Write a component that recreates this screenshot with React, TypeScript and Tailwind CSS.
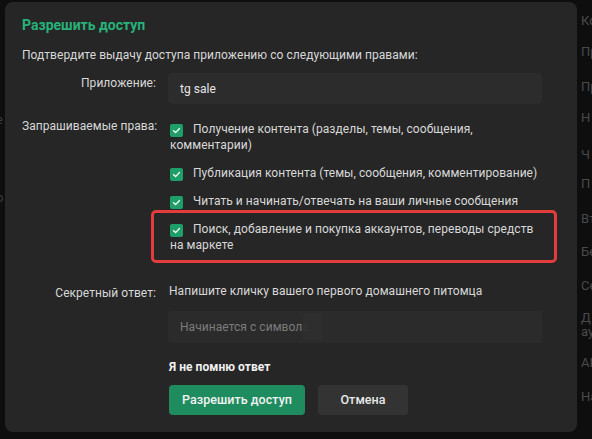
import React from "react";

const font = { fontFamily: 'Roboto, "Open Sans", sans-serif' };

function Check() {
  return (
    <span className="inline-flex items-center justify-center w-[13px] h-[13px] rounded-[2px] bg-[#1f9f68] align-[-2px] mr-[10px]">
      <svg width="9" height="9" viewBox="0 0 10 10" fill="none">
        <path d="M1.8 5.2 L4 7.3 L8.3 2.8" stroke="#ffffff" strokeWidth="1.4" strokeLinecap="round" strokeLinejoin="round" />
      </svg>
    </span>
  );
}

const perms = [
  "Получение контента (разделы, темы, сообщения, комментарии)",
  "Публикация контента (темы, сообщения, комментирование)",
  "Читать и начинать/отвечать на ваши личные сообщения",
];

const sideText = [
  { t: "Ко", y: 14 },
  { t: "Пр", y: 45 },
  { t: "Пр", y: 80 },
  { t: "Н", y: 111 },
  { t: "Ч", y: 148 },
  { t: "П", y: 177 },
  { t: "Вт", y: 212 },
  { t: "Бе", y: 245 },
  { t: "Се", y: 279 },
  { t: "Д", y: 311 },
  { t: "ау", y: 325 },
  { t: "АI", y: 356 },
  { t: "На", y: 390 },
];

export default function App() {
  return (
    <div className="relative w-[592px] h-[439px] bg-[#0e0e0e] overflow-hidden text-[12px] tracking-[0.05px]" style={font}>
      {/* background page glimpses */}
      <div className="absolute left-[581px] top-0 w-[11px] h-[439px] overflow-hidden text-[13px]">
        {sideText.map((s, i) => (
          <div key={i} className="absolute left-0 text-[#4a4a4a] leading-[14px] whitespace-nowrap" style={{ top: s.y }}>
            {s.t}
          </div>
        ))}
      </div>
      <div className="absolute left-0 top-0 w-[4px] h-[439px] overflow-hidden text-[13px]">
        <div className="absolute left-[-4px] top-[112px] text-[#3c3c3c] leading-[16px]">е</div>
        <div className="absolute left-[-4px] top-[190px] text-[#3c3c3c] leading-[16px]">о</div>
      </div>

      {/* modal */}
      <div className="absolute left-[5px] top-[2px] w-[572px] h-[430px] rounded-[8px] bg-[#262626] px-[17px] pt-[12px]">
        <div className="text-[14px] font-bold text-[#27b27a] leading-[22px] tracking-normal">Разрешить доступ</div>
        <div className="mt-[10px] text-[#d8d8d8] leading-[18px]">
          Подтвердите выдачу доступа приложению со следующими правами:
        </div>

        {/* app row */}
        <div className="flex mt-[9px]">
          <div className="w-[134px] shrink-0 text-right text-[#d8d8d8] pt-[1px] leading-[18px] whitespace-nowrap">Приложение:</div>
          <div className="ml-[12px] w-[374px] h-[31px] rounded-[4px] bg-[#2c2c2c] flex items-center px-[12px] text-[#e6e6e6]">
            tg sale
          </div>
        </div>

        {/* perms row */}
        <div className="flex mt-[14px]">
          <div className="w-[134px] shrink-0 text-right text-[#d8d8d8] leading-[16px] whitespace-nowrap">Запрашиваемые права:</div>
          <div className="ml-[14px] w-[374px] flex flex-col gap-[12px] pt-[3px]">
            {perms.map((p, i) => (
              <div key={i} className="text-[#d8d8d8] leading-[16px]">
                <Check />
                {p}
              </div>
            ))}
            <div className="relative text-[#d8d8d8] leading-[16px]">
              <Check />
              Поиск, добавление и покупка аккаунтов, переводы средств на маркете
              <div className="absolute left-[-19px] right-[-13px] top-[-11px] bottom-[-10px] border-[3px] border-[#e23c3c] rounded-[5px]" />
            </div>
          </div>
        </div>

        {/* secret row */}
        <div className="flex mt-[29px]">
          <div className="w-[134px] shrink-0 text-right text-[#d8d8d8] leading-[18px] pt-[2px] whitespace-nowrap">Секретный ответ:</div>
          <div className="ml-[12px] w-[374px] flex flex-col">
            <div className="text-[#d8d8d8] leading-[18px] pl-[1px]">Напишите кличку вашего первого домашнего питомца</div>
            <div className="mt-[11px] h-[32px] rounded-[4px] bg-[#2b2b2b] flex items-center pl-[12px] text-[#7b7b7b]">
              <span>Начинается с символа</span>
              <span className="ml-[-6px] w-[19px] h-[28px] rounded-[3px] bg-[#2f2f2f] opacity-90" />
            </div>
            <div className="mt-[15px] font-bold text-[#f0f0f0] leading-[18px] pl-[1px]">Я не помню ответ</div>
            <div className="flex mt-[9px] gap-[13px] pl-[1px]">
              <button className="h-[30px] w-[136px] rounded-[4px] bg-[#1f8c60] text-[#f2f2f2] text-[12.5px] font-medium">
                Разрешить доступ
              </button>
              <button className="h-[30px] w-[90px] rounded-[4px] bg-[#333333] text-[#e8e8e8] text-[12.5px] font-medium">
                Отмена
              </button>
            </div>
          </div>
        </div>
      </div>
    </div>
  );
}
